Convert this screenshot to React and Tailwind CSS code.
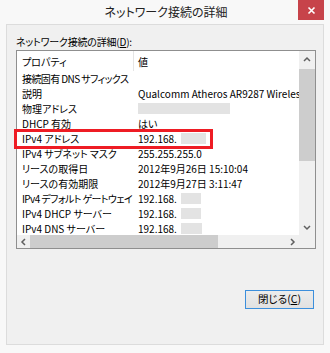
import React from 'react';

const rows = [
  { name: '接続固有 DNS サフィックス', value: '', tight: true },
  { name: '説明', value: 'Qualcomm Atheros AR9287 Wireless Network Adapter' },
  { name: '物理アドレス', value: '', blur: 92 },
  { name: 'DHCP 有効', value: 'はい' },
  { name: 'IPv4 アドレス', value: '192.168.', blur: 25 },
  { name: 'IPv4 サブネット マスク', value: '255.255.255.0' },
  { name: 'リースの取得日', value: '2012年9月26日 15:10:04' },
  { name: 'リースの有効期限', value: '2012年9月27日 3:11:47' },
  { name: 'IPv4 デフォルト ゲートウェイ', value: '192.168.', blur: 20, tight: true },
  { name: 'IPv4 DHCP サーバー', value: '192.168.', blur: 20 },
  { name: 'IPv4 DNS サーバー', value: '192.168.', blur: 21 },
];

const Chevron = ({ dir }) => {
  const d = {
    up: 'M1 5 L4 2 L7 5',
    down: 'M1 2 L4 5 L7 2',
    left: 'M5 1 L2 4 L5 7',
    right: 'M2 1 L5 4 L2 7',
  }[dir];
  return (
    <svg width="8" height="8" viewBox="0 0 8 8">
      <path d={d} fill="none" stroke="#606060" strokeWidth="1.5" />
    </svg>
  );
};

const DetailRow = ({ row }) => (
  <div className="flex h-[15px] items-center whitespace-nowrap">
    <div className={row.tight ? 'w-[117px] shrink-0 pl-[5px] tracking-[-0.6px]' : 'w-[117px] shrink-0 pl-[5px]'}>
      {row.name}
    </div>
    <div className="flex items-center pl-[4px]">
      {row.value && <span>{row.value}</span>}
      {row.blur && (
        <span
          className="inline-block h-[11px] bg-[#e3e3e3]"
          style={{ width: row.blur, marginLeft: row.value ? 4 : 0 }}
        />
      )}
    </div>
  </div>
);

export default function App() {
  return (
    <div
      className="w-[330px] h-[353px] bg-[#f8f8f8] flex flex-col text-black overflow-hidden [font-feature-settings:'palt']"
      style={{ fontFamily: '"Noto Sans CJK JP", "Noto Sans", sans-serif' }}
    >
      <div className="relative h-[24px] shrink-0 flex items-center justify-center text-[12px] text-[#222]">
        <span className="pl-[2px]">ネットワーク接続の詳細</span>
        <div className="absolute right-[6px] top-0 w-[26px] h-[20px] bg-[#c7434a] flex items-center justify-center">
          <svg width="9" height="9" viewBox="0 0 9 9">
            <path d="M1.5 1.5 L7.5 7.5 M7.5 1.5 L1.5 7.5" stroke="#fff" strokeWidth="1.6" />
          </svg>
        </div>
      </div>

      <div className="relative mx-[6px] h-[321px] border border-[#dcdcdc] bg-[#f0f0f0] px-[9px] text-[10px]">
        <div className="pt-[10px] h-[25px] leading-[14px] text-[10px] tracking-[-0.2px]">
          ネットワーク接続の詳細(<span className="underline">D</span>):
        </div>

        <div className="w-[300px] h-[199px] border border-[#8f8f8f] bg-white grid grid-cols-[1fr_16px] grid-rows-[1fr_13px]">
          <div className="overflow-hidden flex flex-col">
            <div className="flex h-[20px] shrink-0 items-center">
              <div className="w-[117px] h-full flex items-center pl-[5px] border-r border-[#e5e5e5]">プロパティ</div>
              <div className="pl-[4px]">値</div>
            </div>
            {rows.map((row) => (
              <DetailRow key={row.name} row={row} />
            ))}
          </div>

          <div className="bg-[#f0f0f0] flex flex-col items-center">
            <div className="h-[18px] flex items-center justify-center">
              <Chevron dir="up" />
            </div>
            <div className="w-full h-[92px] bg-[#cdcdcd]" />
            <div className="flex-1" />
            <div className="h-[14px] flex items-center justify-center">
              <Chevron dir="down" />
            </div>
          </div>

          <div className="bg-[#f0f0f0] flex items-center">
            <div className="w-[13px] flex justify-center">
              <Chevron dir="left" />
            </div>
            <div className="w-[188px] h-full bg-[#cdcdcd]" />
            <div className="flex-1" />
            <div className="w-[13px] flex justify-center">
              <Chevron dir="right" />
            </div>
          </div>
          <div className="bg-[#f0f0f0]" />
        </div>

        <div className="absolute left-[7px] top-[104px] w-[199px] h-[20px] border-[3px] border-[#ee1c24]" />

        <div className="flex justify-end mt-[41px]">
          <button className="w-[69px] h-[19px] border border-[#3c8fdc] bg-gradient-to-b from-[#ececec] to-[#e1e1e1] text-[10.5px] leading-none flex items-center justify-center">
            閉じる(<span className="underline">C</span>)
          </button>
        </div>
      </div>
    </div>
  );
}
